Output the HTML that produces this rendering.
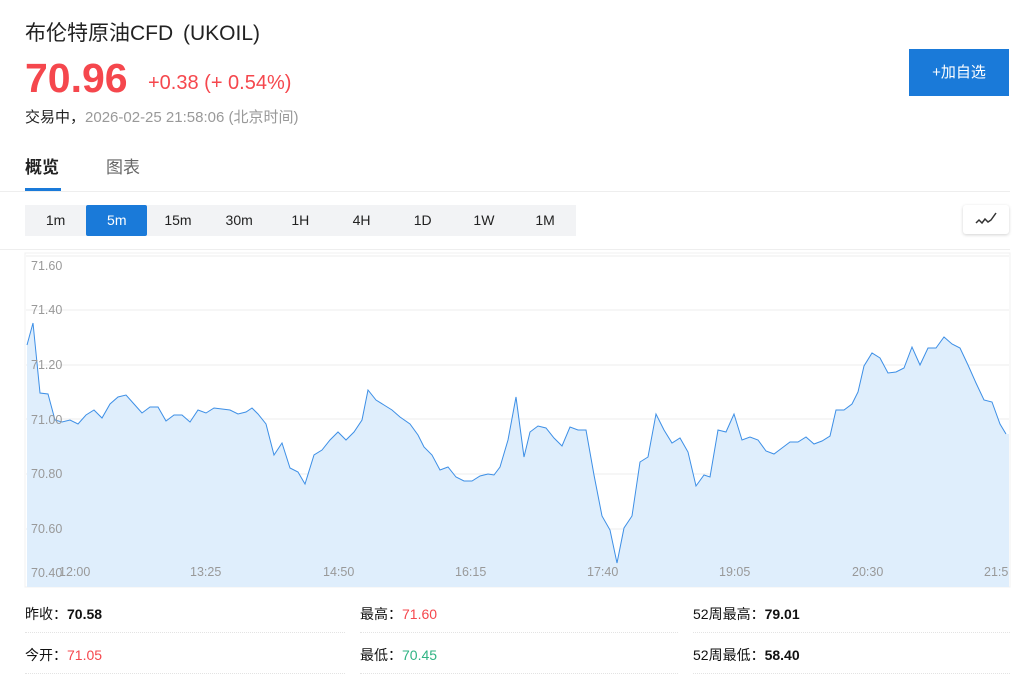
<!DOCTYPE html><html><head><meta charset="utf-8"><style>
body{margin:0;width:1024px;height:684px;background:#fff;font-family:"Liberation Sans","Noto Sans CJK SC",sans-serif;position:relative;overflow:hidden;color:#222}
.a{position:absolute;white-space:nowrap}
.bar{position:absolute;left:25px;top:205px;width:551px;height:31px;background:#f2f3f5;display:flex}
.bar div{width:61.2px;text-align:center;line-height:31px;font-size:14px;color:#222}
.bar .on{background:#1a7ad9;color:#fff;border-radius:2px}
.st{font-size:14px;color:#111}
.st b{font-weight:bold}
.dv{position:absolute;height:0;border-top:1px dotted #e3e3e3}
</style></head><body>
<div class="a" style="left:25px;top:17px;font-size:21px;color:#222">布伦特原油CFD <span style="margin-left:4px">(UKOIL)</span></div>
<div class="a" style="left:25px;top:55px;font-size:41px;font-weight:bold;color:#f5474d;letter-spacing:0px">70.96</div>
<div class="a" style="left:148px;top:72px;font-size:20px;color:#f5474d">+0.38 (+ 0.54%)</div>
<div class="a" style="left:25px;top:106px;font-size:15px;color:#222">交易中，<span style="color:#999">2026-02-25 21:58:06 (北京时间)</span></div>
<div class="a" style="left:909px;top:49px;width:100px;height:47px;background:#1a7ad9;color:#fff;font-size:15px;text-align:center;line-height:47px">+加自选</div>
<div class="a" style="left:25px;top:153px;font-size:17px;font-weight:bold;color:#222">概览</div>
<div class="a" style="left:106px;top:153px;font-size:17px;color:#666">图表</div>
<div class="a" style="left:0;top:191px;width:1010px;height:1px;background:#eee"></div>
<div class="a" style="left:25px;top:188px;width:36px;height:3px;background:#1a7ad9"></div>
<div class="bar"><div>1m</div><div class="on">5m</div><div>15m</div><div>30m</div><div>1H</div><div>4H</div><div>1D</div><div>1W</div><div>1M</div></div>
<div class="a" style="left:963px;top:205px;width:46px;height:29px;background:#fff;border-radius:3px;box-shadow:0 1px 3px rgba(0,0,0,.18)"><svg width="46" height="29"><path d="M13 18 L16 15 L19 18 L22 14 L25 17 L28 15 L33 8" fill="none" stroke="#333" stroke-width="1.5"/></svg></div>
<div class="a" style="left:0;top:249px;width:1010px;height:1px;background:#eee"></div>
<svg class="a" style="left:0;top:250px" width="1024" height="340">
<rect x="25" y="3" width="985" height="334" fill="#fff" stroke="#f0f0f0"/>
<g stroke="#eee" stroke-width="1">
<line x1="26" x2="1009" y1="6" y2="6"/><line x1="26" x2="1009" y1="60" y2="60"/><line x1="26" x2="1009" y1="115" y2="115"/><line x1="26" x2="1009" y1="169" y2="169"/><line x1="26" x2="1009" y1="224" y2="224"/><line x1="26" x2="1009" y1="279" y2="279"/></g>
<g transform="translate(0,-250)">
<polygon fill="#dfeefc" points="27,587 27,345 33,323 40,393 48,394 55,420 62,422 70,420 78,424 86,415 94,410 102,418 110,404 118,397 126,395 134,404 142,413 150,407 158,407 166,421 174,415 182,415 190,422 198,410 206,413 214,408 222,409 230,410 238,414 246,412 252,408 258,414 266,424 274,455 282,443 290,468 298,472 305,484 314,455 322,450 330,440 338,432 346,440 354,432 362,420 368,390 376,400 384,405 392,410 400,417 410,424 418,435 424,447 432,455 440,470 448,467 456,477 464,481 472,481 480,476 488,474 494,475 500,467 508,440 516,397 524,457 530,432 538,426 546,428 554,438 562,446 570,427 578,430 586,430 594,475 602,516 610,530 617,563 624,528 632,516 640,462 648,457 656,414 664,430 672,443 680,438 688,452 696,486 704,475 710,477 718,430 726,432 734,414 742,440 750,437 758,440 766,451 774,454 782,448 790,442 798,442 806,437 814,444 822,441 830,436 836,410 844,410 852,404 858,392 864,366 872,353 880,358 888,373 896,372 904,368 912,347 920,365 928,348 936,348 944,337 952,344 960,348 968,365 976,383 984,400 992,402 1000,424 1006,434 1009,434 1009,587"/>
<polyline fill="none" stroke="#3d8fe6" stroke-width="1" points="27,345 33,323 40,393 48,394 55,420 62,422 70,420 78,424 86,415 94,410 102,418 110,404 118,397 126,395 134,404 142,413 150,407 158,407 166,421 174,415 182,415 190,422 198,410 206,413 214,408 222,409 230,410 238,414 246,412 252,408 258,414 266,424 274,455 282,443 290,468 298,472 305,484 314,455 322,450 330,440 338,432 346,440 354,432 362,420 368,390 376,400 384,405 392,410 400,417 410,424 418,435 424,447 432,455 440,470 448,467 456,477 464,481 472,481 480,476 488,474 494,475 500,467 508,440 516,397 524,457 530,432 538,426 546,428 554,438 562,446 570,427 578,430 586,430 594,475 602,516 610,530 617,563 624,528 632,516 640,462 648,457 656,414 664,430 672,443 680,438 688,452 696,486 704,475 710,477 718,430 726,432 734,414 742,440 750,437 758,440 766,451 774,454 782,448 790,442 798,442 806,437 814,444 822,441 830,436 836,410 844,410 852,404 858,392 864,366 872,353 880,358 888,373 896,372 904,368 912,347 920,365 928,348 936,348 944,337 952,344 960,348 968,365 976,383 984,400 992,402 1000,424 1006,434"/>
<g font-family="Liberation Sans,sans-serif" font-size="12.5" fill="#999">
<text x="31" y="270">71.60</text><text x="31" y="314">71.40</text><text x="31" y="369">71.20</text><text x="31" y="424">71.00</text><text x="31" y="478">70.80</text><text x="31" y="533">70.60</text><text x="31" y="577">70.40</text>
<text x="59" y="576">12:00</text><text x="190" y="576">13:25</text><text x="323" y="576">14:50</text><text x="455" y="576">16:15</text><text x="587" y="576">17:40</text><text x="719" y="576">19:05</text><text x="852" y="576">20:30</text><text x="984" y="576">21:5</text></g></g>
</svg>
<div class="a st" style="left:25px;top:604px">昨收：<b>70.58</b></div>
<div class="a st" style="left:360px;top:604px">最高：<span style="color:#f5474d">71.60</span></div>
<div class="a st" style="left:693px;top:604px">52周最高：<b>79.01</b></div>
<div class="a st" style="left:25px;top:645px">今开：<span style="color:#f5474d">71.05</span></div>
<div class="a st" style="left:360px;top:645px">最低：<span style="color:#2fb383">70.45</span></div>
<div class="a st" style="left:693px;top:645px">52周最低：<b>58.40</b></div>
<div class="dv" style="left:25px;top:632px;width:320px"></div><div class="dv" style="left:360px;top:632px;width:318px"></div><div class="dv" style="left:693px;top:632px;width:317px"></div>
<div class="dv" style="left:25px;top:673px;width:320px"></div><div class="dv" style="left:360px;top:673px;width:318px"></div><div class="dv" style="left:693px;top:673px;width:317px"></div>
</body></html>
